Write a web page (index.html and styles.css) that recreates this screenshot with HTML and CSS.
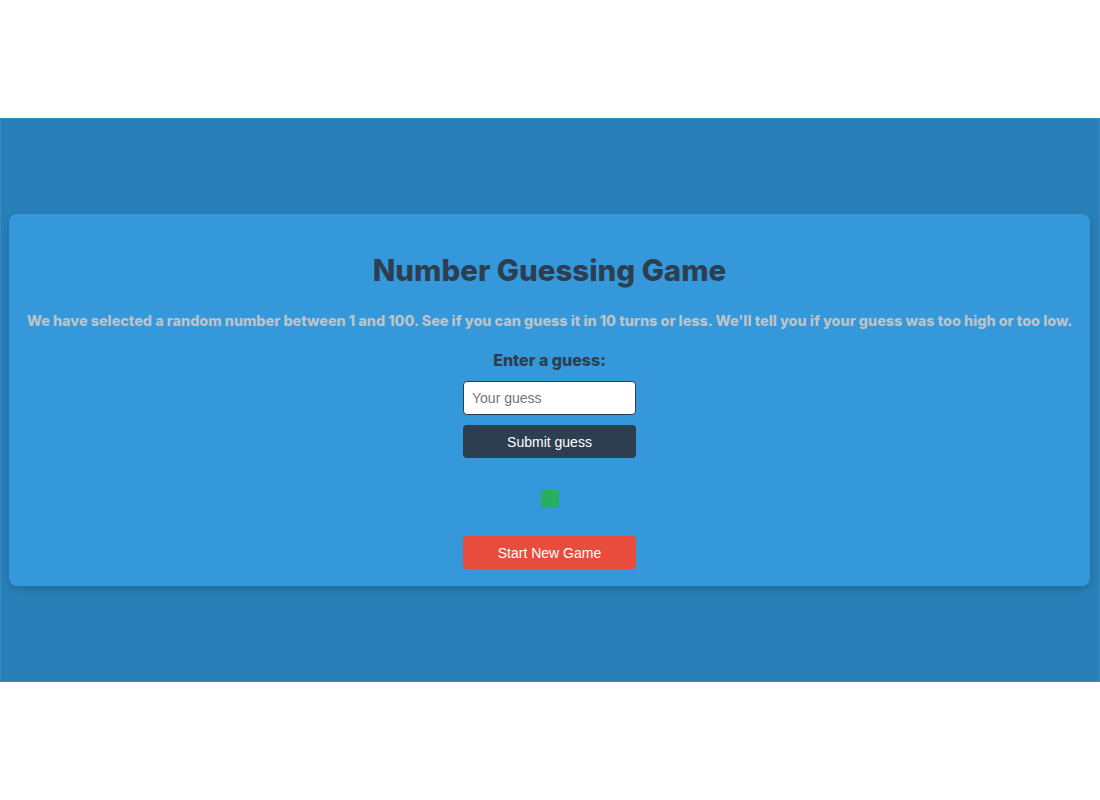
FILE: index.html
```html
<!DOCTYPE html>
<html lang="en">
<head>
<meta charset="utf-8">
<title>Number Guessing Game</title>
<link rel="stylesheet" href="styles.css">
</head>
<body>
<main class="band">
  <section class="card">
    <h1 class="title">Number Guessing Game</h1>
    <p class="intro">We have selected a random number between 1 and 100. See if you can guess it in 10 turns or less. We'll tell you if your guess was too high or too low.</p>
    <form class="form">
      <label class="label" for="guessField">Enter a guess:</label>
      <input class="field" type="number" id="guessField" placeholder="Your guess">
      <button class="btn btn-submit" type="button">Submit guess</button>
    </form>
    <div class="status"><span class="dot"></span></div>
    <button class="btn btn-reset" type="button">Start New Game</button>
  </section>
</main>
</body>
</html>
```
FILE: styles.css
```css
* { box-sizing: border-box; }
html, body { margin: 0; padding: 0; }
body {
  height: 800px;
  display: flex;
  flex-direction: column;
  justify-content: center;
  background: #ffffff;
  font-family: "Inter", "Open Sans", sans-serif;
}
.band {
  background: #2980b9;
  border: 1px solid #3a8ac2;
  padding: 95px 9px 95px 8px;
}
.card {
  background: #3498db;
  border-radius: 8px;
  box-shadow: 0 3px 10px rgba(0, 0, 0, 0.18);
  padding: 34px 8px 17px;
  display: flex;
  flex-direction: column;
  align-items: center;
  text-align: center;
}
.title {
  margin: 0;
  font-size: 29.5px;
  line-height: 44px;
  font-weight: 800;
  color: #2c3e50;
}
.intro {
  margin: 18px 0 0;
  font-size: 14.4px;
  line-height: 22px;
  font-weight: 800;
  color: #bdc3c7;
  white-space: nowrap;
}
.form {
  margin-top: 16px;
  display: flex;
  flex-direction: column;
  align-items: center;
}
.label {
  font-size: 16px;
  line-height: 24px;
  font-weight: 800;
  color: #2c3e50;
}
.field {
  margin-top: 9px;
  width: 173px;
  height: 34px;
  padding: 0 8px;
  border: 1px solid #2c3e50;
  border-radius: 4px;
  background: #fff;
  font-family: "Liberation Sans", Arial, sans-serif;
  font-size: 14px;
  color: #333;
}
.field::placeholder { color: #757575; }
.btn {
  width: 173px;
  height: 33px;
  border: none;
  border-radius: 4px;
  color: #fff;
  font-family: "Liberation Sans", Arial, sans-serif;
  font-size: 14px;
  cursor: pointer;
}
.btn-submit {
  margin-top: 10px;
  background: #2c3e50;
}
.status {
  margin-top: 32px;
  height: 18px;
  display: flex;
  justify-content: center;
}
.dot {
  width: 18px;
  height: 18px;
  border-radius: 3px;
  background: #27ae60;
}
.btn-reset {
  margin-top: 28px;
  background: #e74c3c;
}
```
